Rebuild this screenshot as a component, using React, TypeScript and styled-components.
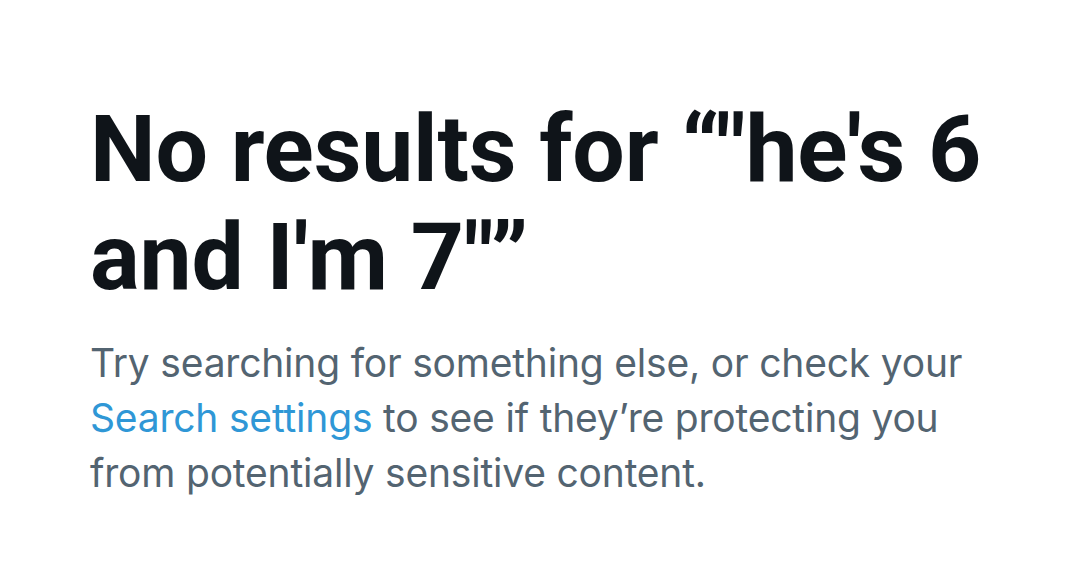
import styled, { createGlobalStyle } from "styled-components";

const GlobalStyle = createGlobalStyle`
  html, body {
    margin: 0;
    padding: 0;
    background: #ffffff;
  }
  body {
    font-family: Inter, "Noto Sans", "Liberation Sans", sans-serif;
  }
`;

const Page = styled.main`
  width: 1080px;
  height: 582px;
  box-sizing: border-box;
  padding: 96px 80px 0 90px;
  background: #ffffff;
`;

const Title = styled.h1`
  margin: 0;
  font-family: Roboto, Inter, "Liberation Sans", sans-serif;
  font-size: 93px;
  line-height: 108px;
  font-weight: 700;
  letter-spacing: -0.2px;
  color: #0f1419;
`;

const Message = styled.p`
  margin: 23px 0 0 0;
  font-size: 39px;
  line-height: 55px;
  font-weight: 400;
  letter-spacing: -0.2px;
  color: #536471;
`;

const Link = styled.a`
  color: #2f97d6;
  text-decoration: none;
`;

const App = () => {
  return (
    <>
      <GlobalStyle />
      <Page>
        <Title>No results for “"he's 6 and I'm 7"”</Title>
        <Message>
          Try searching for something else, or check your{" "}
          <Link href="#">Search settings</Link> to see if they’re protecting
          you from potentially sensitive content.
        </Message>
      </Page>
    </>
  );
};

export default App;
